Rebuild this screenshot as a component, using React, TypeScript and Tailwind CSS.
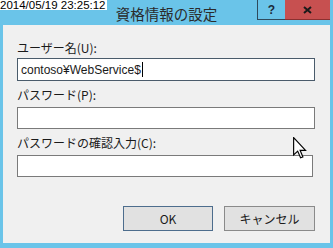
import React from "react";

const jp = { fontFamily: '"Noto Sans CJK JP", "Noto Sans", sans-serif' };

export default function App() {
  return (
    <div className="relative w-[333px] h-[248px] bg-[#6ac4e9] flex flex-col overflow-hidden" style={jp}>
      {/* timestamp overlay */}
      <div
        className="absolute left-0 top-0 bg-white text-black text-[11.5px] leading-[10px] h-[10px] pr-[1px] whitespace-nowrap"
        style={{ fontFamily: '"Liberation Sans", Arial, sans-serif' }}
      >
        2014/05/19 23:25:12
      </div>

      {/* title bar */}
      <div className="grid grid-cols-[1fr_auto_1fr] h-[25px] shrink-0">
        <div />
        <div className="text-[14.5px] leading-[25px] text-[#2b2b2b] pt-[1px]">資格情報の設定</div>
        <div className="flex justify-end items-start pr-[3px]">
          <div className="w-[28px] h-[20px] border-l border-b border-[#2e4a5c] flex items-center justify-center text-[12px] font-bold text-[#1a2a3a]" style={{ fontFamily: '"Liberation Sans", Arial, sans-serif' }}>
            ?
          </div>
          <div className="w-[45px] h-[20px] bg-[#c75050] border-b border-[#8a3030] flex items-center justify-center">
            <svg width="9" height="8" viewBox="0 0 9 8">
              <path d="M1 1 L8 7 M8 1 L1 7" stroke="#1a1a1a" strokeWidth="2" />
            </svg>
          </div>
        </div>
      </div>

      {/* client area */}
      <div className="flex-1 mx-[3px] mb-[5px] bg-[#f0f0f0] flex flex-col pl-[14px] pr-[15px] text-[12px] text-[#1a1a1a]">
        <div className="mt-[15px] h-[18px] leading-[16px]">ユーザー名(U):</div>
        <div className="h-[23px] bg-white border border-[#4a5b6b] flex items-center pl-[3px]">
          <span style={{ fontFamily: '"Liberation Sans", Arial, sans-serif' }}>contoso¥WebService$</span>
          <span className="w-[1px] h-[15px] bg-black ml-[1px]" />
        </div>
        <div className="h-[26px] pt-[6px] leading-[16px]">パスワード(P):</div>
        <div className="h-[22px] bg-white border border-[#7a7a7a]" />
        <div className="h-[26px] pt-[6px] leading-[16px]">パスワードの確認入力(C):</div>
        <div className="h-[22px] bg-white border border-[#7a7a7a] mr-[2px]" />

        <div className="mt-[29px] flex justify-end gap-[11px]">
          <div className="w-[90px] h-[25px] bg-[#e1e1e1] border border-[#4d6d8d] flex items-center justify-center">OK</div>
          <div className="w-[91px] h-[25px] bg-[#e1e1e1] border border-[#8a8a8a] flex items-center justify-center">キャンセル</div>
        </div>
      </div>

      {/* mouse cursor */}
      <svg className="absolute left-[293px] top-[137px]" width="14" height="22" viewBox="0 0 12 19">
        <path d="M0.5 0.5 L0.5 15.5 L4 12.2 L6.5 18 L8.5 17.2 L6.1 11.5 L10.8 11.5 Z" fill="white" stroke="black" strokeWidth="1" strokeLinejoin="miter" />
      </svg>
    </div>
  );
}
